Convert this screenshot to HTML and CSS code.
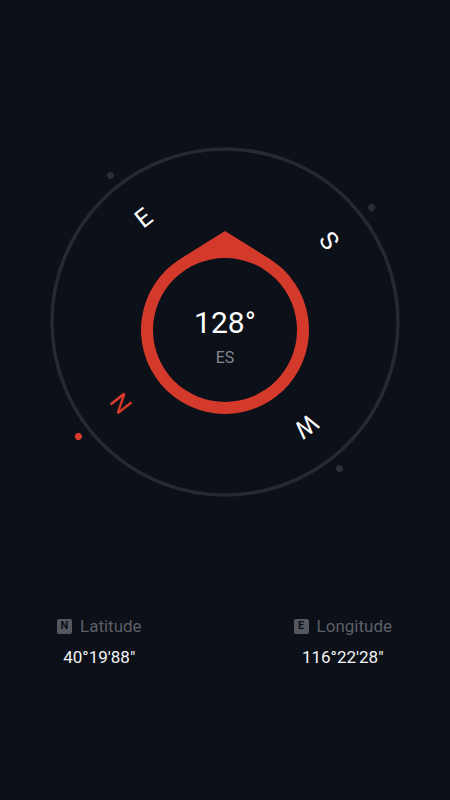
FILE: index.html
```html
<!DOCTYPE html>
<html lang="en">
<head>
  <meta charset="UTF-8">
  <meta name="viewport" content="width=device-width, initial-scale=1.0">
  <title>Compass</title>
  <link rel="stylesheet" href="styles.css">
</head>
<body>
  <main class="screen">
    <section class="compass">
      <svg class="dial" width="400" height="400" viewBox="0 0 400 400">
        <circle class="ring" cx="200" cy="200" r="173"></circle>

        <g transform="rotate(-128 200 200)">
          <circle class="dot dot-north" cx="200" cy="14" r="3.5"></circle>
          <circle class="dot" cx="200" cy="14" r="3.5" transform="rotate(90 200 200)"></circle>
          <circle class="dot" cx="200" cy="14" r="3.5" transform="rotate(180 200 200)"></circle>
          <circle class="dot" cx="200" cy="14" r="3.5" transform="rotate(270 200 200)"></circle>

          <text class="cardinal north" x="200" y="68">N</text>
          <text class="cardinal" x="200" y="68" transform="rotate(90 200 200)">E</text>
          <text class="cardinal" x="200" y="68" transform="rotate(180 200 200)">S</text>
          <text class="cardinal" x="200" y="68" transform="rotate(270 200 200)">W</text>
        </g>

        <path class="needle" fill-rule="evenodd"
          d="M200 109 L244.45 136.73 A84 84 0 1 1 155.55 136.73 Z
             M200 136 A72 72 0 1 0 200 280 A72 72 0 1 0 200 136 Z"></path>

        <text class="heading" x="200" y="211">128°</text>
        <text class="heading-dir" x="200" y="241">ES</text>
      </svg>
    </section>

    <section class="coords">
      <div class="coord">
        <div class="coord-label"><span class="badge">N</span>Latitude</div>
        <div class="coord-value">40°19'88"</div>
      </div>
      <div class="coord">
        <div class="coord-label"><span class="badge">E</span>Longitude</div>
        <div class="coord-value">116°22'28"</div>
      </div>
    </section>
  </main>
</body>
</html>
```

FILE: styles.css
```css
html, body {
  margin: 0;
  height: 100%;
}

body {
  background-color: #0c1019;
  font-family: Roboto, "Noto Sans", sans-serif;
  color: #f2f2f2;
}

.screen {
  width: 450px;
  height: 800px;
  overflow: hidden;
}

.compass {
  display: flex;
  justify-content: center;
  padding-top: 122px;
}

.dial {
  display: block;
}

.ring {
  fill: none;
  stroke: #262930;
  stroke-width: 3.5;
}

.dot {
  fill: #2b2e35;
}

.dot-north {
  fill: #d83b2d;
}

.cardinal {
  fill: #ffffff;
  font-size: 25px;
  text-anchor: middle;
  dominant-baseline: central;
}

.cardinal.north {
  fill: #d83b2d;
}

.needle {
  fill: #d43a2c;
}

.heading {
  fill: #ffffff;
  font-size: 30px;
  text-anchor: middle;
}

.heading-dir {
  fill: #85888e;
  font-size: 16px;
  text-anchor: middle;
}

.coords {
  display: flex;
  justify-content: space-between;
  margin-top: 94px;
  padding: 0 58px 0 57px;
}

.coord {
  display: flex;
  flex-direction: column;
  align-items: center;
  gap: 11px;
}

.coord-label {
  display: flex;
  align-items: center;
  gap: 8px;
  font-size: 17px;
  line-height: 20px;
  color: #5c5f66;
}

.badge {
  display: inline-flex;
  align-items: center;
  justify-content: center;
  width: 15px;
  height: 15px;
  border-radius: 2px;
  background-color: #55585f;
  color: #0c1019;
  font-size: 11px;
  font-weight: bold;
}

.coord-value {
  font-size: 17px;
  line-height: 20px;
  color: #f4f4f4;
}
```
